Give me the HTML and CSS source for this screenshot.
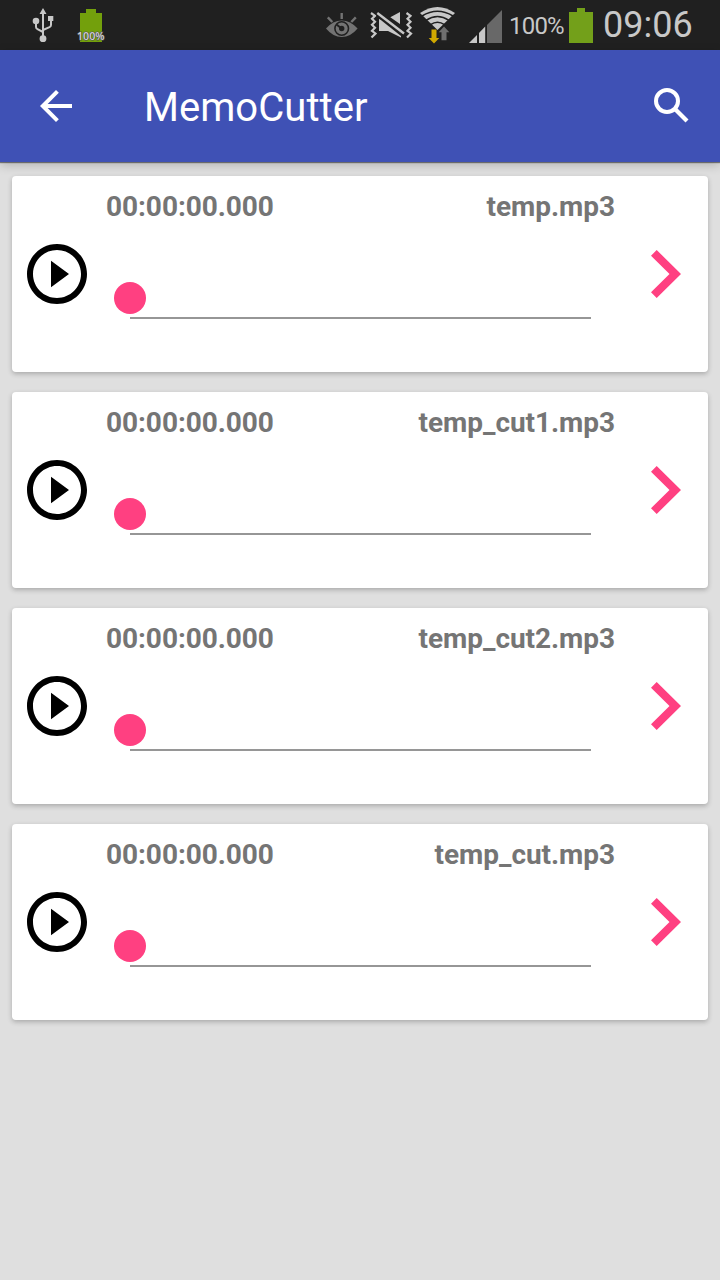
FILE: index.html
```html
<!DOCTYPE html>
<html lang="en">
<head>
<meta charset="utf-8">
<title>MemoCutter</title>
<link rel="stylesheet" href="styles.css">
</head>
<body>
<svg class="defs" width="0" height="0">
  <symbol id="play" viewBox="2 2 20 20"><path d="M10 16.400l6-4.400-6-4.400v8.800zM12 2C6.480 2 2 6.480 2 12s4.480 10 10 10 10-4.480 10-10S17.520 2 12 2zm0 18c-4.410 0-8-3.590-8-8s3.590-8 8-8 8 3.590 8 8-3.590 8-8 8z"/></symbol>
  <symbol id="next" viewBox="0 0 30 48"><path d="M0 5.700L5.700 0 30 24 5.700 48 0 42.300 18.500 24z" fill="#ff4081"/></symbol>
</svg>
<div class="status">
  <svg class="status-icon notices" width="120" height="50" viewBox="0 0 120 50">
    <g fill="none" stroke="#c8c8c8" stroke-width="2"><path d="M43 12v27M36 21v6q0 1.500 1.500 2.200L43 32M51 18v7q0 1.500-1.500 2.200L43 30"/></g>
    <g fill="#c8c8c8"><path d="M43 8l3.500 6h-7zM48 16h5.300v5H48z"/><circle cx="36" cy="21" r="3.300"/><circle cx="43" cy="38.700" r="3.400"/></g>
    <path d="M80 13h6V9h10v4h6v29H80z" fill="#73a00c"/>
    <text class="tiny" x="77" y="40" textLength="27.500" lengthAdjust="spacingAndGlyphs">100%</text>
  </svg>
  <svg class="status-icon" width="184" height="50" viewBox="320 0 184 50">
    <path d="M326 28.500q7-8 15.700-8 8.700 0 15.900 8-7 8.500-15.900 8.500-8.700 0-15.700-8.500z" fill="#737373"/>
    <circle cx="341.700" cy="28.500" r="6.800" fill="none" stroke="#202020" stroke-width="1.600"/>
    <path d="M336.500 24.500l4.500 3.500" fill="none" stroke="#202020" stroke-width="2"/>
    <circle cx="341.700" cy="28.500" r="2.700" fill="#202020"/>
    <path d="M341.700 13v6M327.800 17.300l4.500 4.700M355.800 17.300l-4.500 4.700" stroke="#737373" stroke-width="2.400"/>
    <path d="M371 13l4 2.800-3 3 3 3-3 3 3 3-3 3 3.500 2.700-4 4M406.500 13l4 2.800-3 3 3 3-3 3 3 3-3 3 3.500 2.700-4 4" fill="none" stroke="#c8c8c8" stroke-width="2.200"/>
    <path d="M400 12v12l-9.700-6.700zM379 19l4 1 18 14v3.500L388 31h-9z" fill="#c8c8c8"/>
    <path d="M376.500 15.300L402.500 36" stroke="#202020" stroke-width="2"/>
    <path d="M377.300 13L404 33.500" stroke="#c8c8c8" stroke-width="2.400"/>
    <path d="M420 13Q437.500 1 455 13L437.500 30z" fill="#c8c8c8"/>
    <g fill="none" stroke="#202020" stroke-width="1.500"><path d="M422 16q15.500-9.500 31 0M426 20.300q11.500-7.500 23 0M430.500 24.700q7-4.800 14 0"/></g>
    <path d="M431.500 29.500h5V38h2.800l-5.300 5.500-5.300-5.500h2.800z" fill="#d0a800"/>
    <path d="M441.500 40.300v-8h-2.800L444 26.500l5.300 5.800h-2.800v8z" fill="#707070"/>
    <path d="M469 43l8-8v8zM479 43V33l6.200-6.500V43z" fill="#c8c8c8"/>
    <path d="M487 43V25L502 10v33z" fill="#686868"/>
  </svg>
  <span class="percent">100%</span>
  <svg class="status-icon battery" width="24" height="50" viewBox="0 0 24 50"><path d="M0 12h8V8h8v4h8v31H0z" fill="#73a01a"/></svg>
  <span class="clock">09:06</span>
</div>
<header class="toolbar">
  <svg class="back" width="32" height="32" viewBox="4 4 16 16"><path d="M20 11H7.830l5.590-5.590L12 4l-8 8 8 8 1.410-1.410L7.830 13H20z" fill="#fff"/></svg>
  <h1 class="title">MemoCutter</h1>
  <svg class="search" width="35" height="35" viewBox="0 0 35 35"><circle cx="13" cy="13" r="11" fill="none" stroke="#fff" stroke-width="4"/><path d="M21.500 21.500L33 33" stroke="#fff" stroke-width="4.200"/></svg>
</header>
<main class="list">
  <article class="card">
    <svg class="play"><use href="#play"/></svg>
    <div class="body"><div class="labels"><span>00:00:00.000</span><span>temp.mp3</span></div><div class="slider"><i class="thumb"></i></div></div>
    <svg class="next"><use href="#next"/></svg>
  </article>
  <article class="card">
    <svg class="play"><use href="#play"/></svg>
    <div class="body"><div class="labels"><span>00:00:00.000</span><span>temp_cut1.mp3</span></div><div class="slider"><i class="thumb"></i></div></div>
    <svg class="next"><use href="#next"/></svg>
  </article>
  <article class="card">
    <svg class="play"><use href="#play"/></svg>
    <div class="body"><div class="labels"><span>00:00:00.000</span><span>temp_cut2.mp3</span></div><div class="slider"><i class="thumb"></i></div></div>
    <svg class="next"><use href="#next"/></svg>
  </article>
  <article class="card">
    <svg class="play"><use href="#play"/></svg>
    <div class="body"><div class="labels"><span>00:00:00.000</span><span>temp_cut.mp3</span></div><div class="slider"><i class="thumb"></i></div></div>
    <svg class="next"><use href="#next"/></svg>
  </article>
</main>
</body>
</html>
```
FILE: styles.css
```css
* { box-sizing: border-box; }
body {
  margin: 0;
  min-height: 1280px;
  background: #dfdfdf;
  font-family: Roboto, "Liberation Sans", sans-serif;
}
.defs { display: block; }
.status {
  display: flex;
  height: 50px;
  background: #202020;
  color: #c8c8c8;
}
.status-icon { display: block; flex: none; }
.notices { margin-right: 200px; }
.tiny {
  font: 600 10.5px "Open Sans", sans-serif;
  fill: #d0d0d0;
  stroke: #505050;
  stroke-width: 1.2px;
  paint-order: stroke;
}
.percent {
  width: 65px;
  padding-left: 5px;
  font-size: 24px;
  line-height: 53px;
  letter-spacing: -0.8px;
}
.clock {
  margin-left: 10px;
  font-size: 36px;
  line-height: 50px;
}
.toolbar {
  position: relative;
  display: flex;
  align-items: center;
  height: 112px;
  padding: 0 31px 0 40px;
  background: #3f51b5;
  box-shadow: 0 1px 1px rgba(0, 0, 0, .45), 0 3px 10px rgba(0, 0, 0, .2);
}
.title {
  flex: 1;
  margin: 4px 0 0 72px;
  color: #fff;
  font-size: 40px;
  font-weight: 400;
  line-height: 48px;
  letter-spacing: 0.05px;
}
.search { margin-top: -1px; }
.list {
  display: flex;
  flex-direction: column;
  gap: 20px;
  padding: 14px 12px;
}
.card {
  display: flex;
  align-items: center;
  height: 196px;
  padding: 0 27px 0 15px;
  background: #fff;
  border-radius: 4px;
  box-shadow: 0 2px 5px rgba(0, 0, 0, .24);
}
.play { width: 60px; height: 60px; }
.next { width: 30px; height: 48px; margin-left: auto; }
.body { align-self: stretch; width: 509px; margin-left: 19px; padding-top: 15px; }
.labels {
  display: flex;
  justify-content: space-between;
  color: #757575;
  font-size: 28px;
  font-weight: 700;
  line-height: 32px;
  letter-spacing: -0.05px;
}
.slider {
  width: 461px;
  height: 37px;
  margin: 59px 0 0 24px;
  border-bottom: 2px solid #969696;
}
.thumb {
  display: block;
  width: 32px;
  height: 32px;
  margin-left: -16px;
  border-radius: 50%;
  background: #ff4081;
}
```
